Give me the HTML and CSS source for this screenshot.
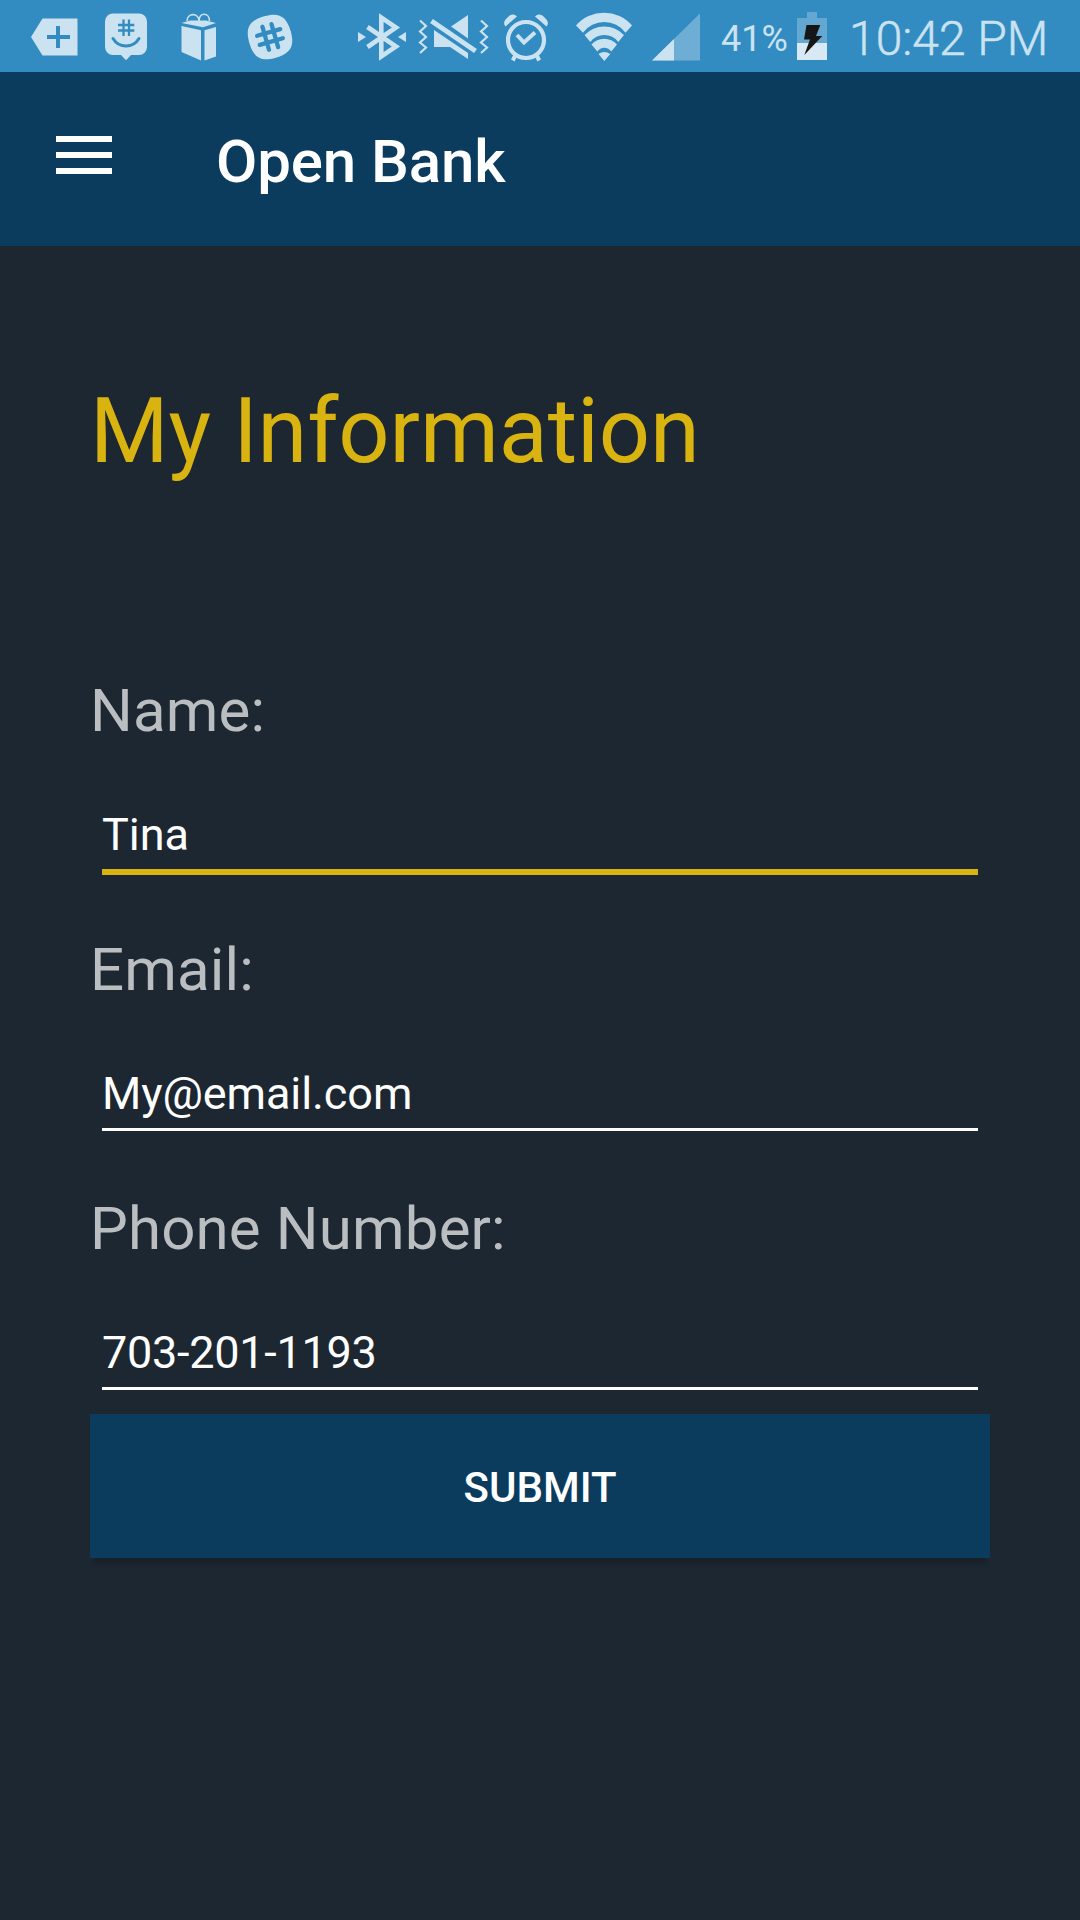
FILE: index.html
```html
<!DOCTYPE html>
<html lang="en">
<head>
<meta charset="utf-8">
<title>Open Bank</title>
<link rel="stylesheet" href="styles.css">
</head>
<body>
<div class="statusbar">
  <div class="notifications">
    <svg class="icon" width="48" height="72" viewBox="30 0 48 72">
      <path d="M31 37 42.5 18.5H77.5V55.5H42.5Z"/>
      <path class="cut" d="M56 26h4v9h10v4H60v9h-4v-9h-9v-4h9Z"/>
    </svg>
    <svg class="icon" width="44" height="72" viewBox="104 0 44 72">
      <path d="M113 13.5h26a8 8 0 0 1 8 8V47a8 8 0 0 1-8 8h-8l-5 5.300-5-5.300h-8a8 8 0 0 1-8-8V21.500a8 8 0 0 1 8-8Z"/>
      <path class="cut-line" stroke-width="2.300" d="M123.500 19.500V36M129 19.500V36M118 25H134.300M118 30.500H134.300"/>
      <path class="cut-line" stroke-width="3" stroke-linecap="round" d="M113 38.500C119 48.500 133 48.500 139 38.500"/>
    </svg>
    <svg class="icon" width="38" height="72" viewBox="180 0 38 72">
      <path d="M181.500 23 190 20.500H206L216 23 203 27.300ZM181.500 26 201 30.300V60.500L181.500 52ZM204.500 30.300 216 27V56.500L204.500 60.500Z"/>
      <path class="line" stroke-width="1.600" d="M187 21C187 12.500 199 12.500 199 21M199 21C199 11.500 209.500 12.500 209.500 21"/>
    </svg>
    <svg class="icon" width="48" height="72" viewBox="246 0 48 72">
      <g transform="rotate(-16 270 37)">
        <path d="M270 15.500C285 15.500 291.500 21 291.500 37S285 58.500 270 58.500 248.500 53 248.500 37 255 15.500 270 15.500Z"/>
        <path class="cut-line" stroke-width="4.300" stroke-linecap="round" d="M265.500 25V49M275 25V49M258 32.300H282M258 41.700H282"/>
      </g>
    </svg>
  </div>
  <div class="system">
    <svg class="icon" width="50" height="72" viewBox="357 0 50 72">
      <path class="line" stroke-width="4.600" d="M367.500 27 396 46.500 381.300 56.500V17.500L396 27.500 367.500 47"/>
      <path d="M358 32V42L366 37ZM406 32V42L398 37Z"/>
    </svg>
    <svg class="icon" width="72" height="72" viewBox="418 0 72 72">
      <path class="line" stroke-width="2.200" d="M421 20.500 427 26 421 31.500 427 37 421 42.500 427 47.500 421 53M482 20.500 488 26 482 31.500 488 37 482 42.500 488 47.500 482 53"/>
      <path d="M452 26.500 469 15V38.500ZM435 30 469 53V59L451 47H435Z"/>
      <path class="line" stroke-width="5" d="M432.500 21 476.500 51"/>
    </svg>
    <svg class="icon" width="46" height="72" viewBox="503 0 46 72">
      <circle class="line" cx="526" cy="40" r="18" stroke-width="4.200"/>
      <path class="line" stroke-width="4" d="M517 35 524 42.500 535 32.500"/>
      <path class="line" stroke-width="4" d="M516 54 512.800 60.500M536 54 539.200 60.500"/>
      <path d="M505.500 26.500C502 22 506 19 508 17S513 13 517 16.500ZM546.500 26.500C550 22 546 19 544 17S539 13 535 16.500Z"/>
    </svg>
    <svg class="icon" width="58" height="72" viewBox="575 0 58 72">
      <path d="M576 25.500A37 37 0 0 1 632 25.500L625.500 32.700A26.500 26.500 0 0 0 583 32.700ZM584.500 35A27 27 0 0 1 624 35L618.300 42A17.500 17.500 0 0 0 590.300 42ZM591.500 44.500A17 17 0 0 1 617 44.500L611.300 51.500A8.500 8.500 0 0 0 597.300 51.500ZM598.500 54Q604.300 50 610.300 54L604.300 61Z"/>
    </svg>
    <svg class="icon" width="48" height="72" viewBox="652 0 48 72">
      <path class="faded" d="M652 60.500H700V13.500Z"/>
      <path d="M652 60.500H674V39Z"/>
    </svg>
    <span class="percent">41%</span>
    <svg class="icon battery" width="30" height="72" viewBox="797 0 30 72">
      <path class="faded-dark" d="M807 12h10v6h10v25h-30V18h10Z"/>
      <path class="charge" d="M797 43h30v17h-30Z"/>
      <path class="bolt" d="M806.500 25H820.300L816 36H822.300L804.300 55 810 39.500H804Z"/>
    </svg>
    <span class="clock">10:42 PM</span>
  </div>
</div>
<header class="appbar">
  <button class="menu" type="button" aria-label="Menu"><span></span><span></span><span></span></button>
  <div class="brand">Open Bank</div>
</header>
<main class="content">
  <h1 class="heading">My Information</h1>
  <form>
    <div class="fields">
      <div class="field active">
        <label class="label" for="name">Name:</label>
        <input class="input" id="name" type="text" value="Tina">
      </div>
      <div class="field">
        <label class="label" for="email">Email:</label>
        <input class="input" id="email" type="text" value="My@email.com">
      </div>
      <div class="field">
        <label class="label" for="phone">Phone Number:</label>
        <input class="input phone" id="phone" type="text" value="703-201-1193">
      </div>
    </div>
    <button class="submit" type="button">SUBMIT</button>
  </form>
</main>
</body>
</html>
```
FILE: styles.css
```css
* {
  box-sizing: border-box;
}

body {
  margin: 0;
  min-height: 1920px;
  background: #1d2731;
  color: #fff;
  font-family: Roboto, "Liberation Sans", sans-serif;
}

.statusbar {
  display: flex;
  justify-content: space-between;
  height: 72px;
  padding: 0 31px 0 30px;
  background: #328cc1;
  color: #cbe2f0;
}

.notifications,
.system {
  display: flex;
}

.notifications {
  gap: 26px;
}

.notifications .icon:nth-child(3) {
  margin: 0 2px 0 6px;
}

.icon {
  display: block;
  flex: none;
  fill: #cbe2f0;
}

.system .icon + .icon {
  margin-left: 10px;
}

.system .icon:nth-child(3) {
  margin-left: 14px;
}

.system .icon:nth-child(4) {
  margin-left: 26px;
}

.system .icon:nth-child(5) {
  margin-left: 19px;
}

.icon .cut {
  fill: #328cc1;
}

.icon .cut-line {
  fill: none;
  stroke: #328cc1;
}

.icon .line {
  fill: none;
  stroke: #cbe2f0;
}

.icon .faded {
  fill: #6eaed5;
}

.icon .faded-dark {
  fill: #64a7d0;
}

.icon .charge {
  fill: #d8e8f5;
}

.icon .bolt {
  fill: #161616;
}

.percent {
  width: 76px;
  margin-left: 21px;
  font-size: 36px;
  line-height: 79px;
}

.clock {
  width: 200px;
  margin-left: 22px;
  font-size: 48px;
  font-weight: 300;
  line-height: 77px;
  white-space: nowrap;
  -webkit-text-stroke: 0.5px currentColor;
}

.appbar {
  display: flex;
  align-items: flex-start;
  gap: 104px;
  height: 174px;
  padding: 55px 56px 0;
  background: #0b3c5d;
}

.menu {
  display: flex;
  flex-direction: column;
  gap: 10px;
  width: 56px;
  margin-top: 9px;
  padding: 0;
  border: 0;
  background: none;
}

.menu span {
  width: 56px;
  height: 6px;
  background: #fff;
}

.brand {
  font-size: 60px;
  font-weight: 500;
  letter-spacing: -0.12px;
  line-height: 70px;
}

.content {
  padding: 133px 90px 0;
}

.heading {
  margin: 0 0 191px;
  color: #d9b310;
  font-size: 90px;
  font-weight: 400;
  letter-spacing: -0.1px;
  line-height: 106px;
}

.fields {
  display: flex;
  flex-direction: column;
  gap: 62px;
}

.field {
  display: flex;
  flex-direction: column;
  gap: 62px;
  height: 197px;
}

.label {
  color: #bbbec1;
  font-size: 60px;
  letter-spacing: 0.15px;
  line-height: 70px;
}

.input {
  flex: none;
  height: 64px;
  margin: 0 12px;
  padding: 0 0 8px;
  border: 0;
  border-bottom: 3px solid #fff;
  outline: 0;
  background: none;
  color: #fff;
  font: 45px/53px Roboto, "Liberation Sans", sans-serif;
  letter-spacing: -0.08px;
}

.input.phone {
  letter-spacing: -0.28px;
}

.active .input {
  height: 67px;
  border-bottom: 6px solid #d9b310;
}

.submit {
  display: block;
  width: 100%;
  height: 144px;
  margin-top: 23px;
  padding: 4px 0 0;
  border: 0;
  background: #0b3c5d;
  box-shadow: 0 9px 5px -4px rgba(0, 0, 0, 0.22);
  color: #fff;
  font: 500 42px/50px Roboto, "Liberation Sans", sans-serif;
}
```
